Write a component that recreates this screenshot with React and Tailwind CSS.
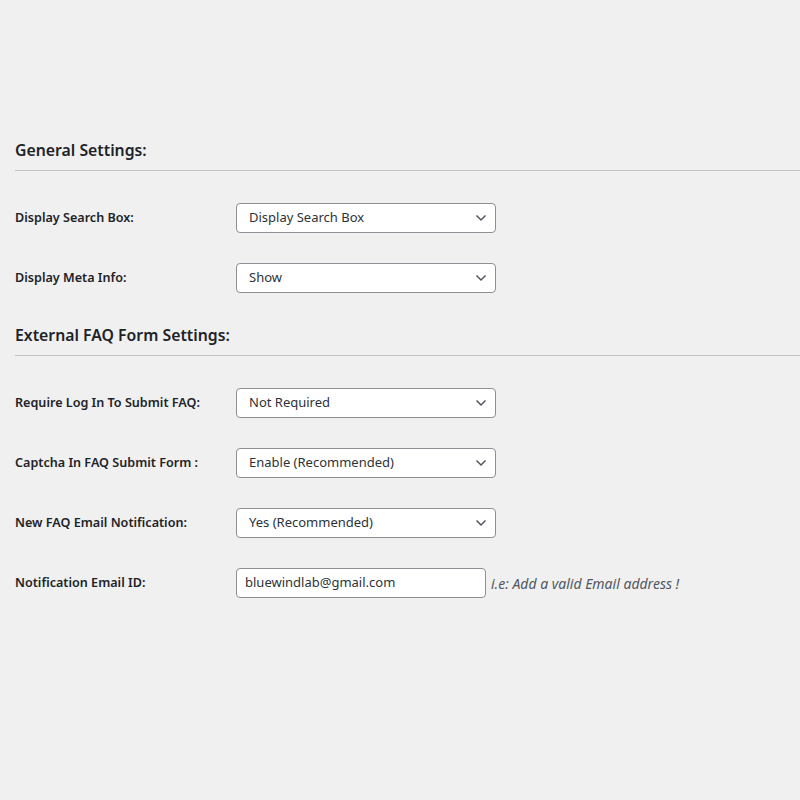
import React from "react";

const font = { fontFamily: '"Noto Sans", "Open Sans", sans-serif' };

const Chevron = () => (
  <svg width="12" height="8" viewBox="0 0 12 8" className="shrink-0">
    <polyline points="1.5,1.5 6,6 10.5,1.5" fill="none" stroke="#50575e" strokeWidth="1.5" />
  </svg>
);

const SelectBox = ({ value }) => (
  <div className="flex h-[30px] w-[260px] items-center justify-between rounded-[4px] border border-[#8c8f94] bg-white pl-[12px] pr-[8px] text-[13px] text-[#2c3338]">
    <span>{value}</span>
    <Chevron />
  </div>
);

const Row = ({ label, children }) => (
  <div className="flex items-center py-[15px]">
    <div className="w-[221px] shrink-0 text-[12.6px] font-semibold text-[#1d2327]">{label}</div>
    {children}
  </div>
);

const Section = ({ title, children }) => (
  <div>
    <h2 className="text-[15.8px] font-semibold leading-[22px] text-[#1d2327]">{title}</h2>
    <div className="mt-[9px] mb-[17px] h-px bg-[#c3c4c7]"></div>
    {children}
  </div>
);

export default function App() {
  return (
    <div className="min-h-[800px] w-[800px] bg-[#f0f0f1] pl-[15px] pt-[139px]" style={font}>
      <Section title="General Settings:">
        <Row label="Display Search Box:">
          <SelectBox value="Display Search Box" />
        </Row>
        <Row label="Display Meta Info:">
          <SelectBox value="Show" />
        </Row>
      </Section>
      <div className="mt-[16px]">
        <Section title="External FAQ Form Settings:">
          <Row label="Require Log In To Submit FAQ:">
            <SelectBox value="Not Required" />
          </Row>
          <Row label="Captcha In FAQ Submit Form :">
            <SelectBox value="Enable (Recommended)" />
          </Row>
          <Row label="New FAQ Email Notification:">
            <SelectBox value="Yes (Recommended)" />
          </Row>
          <Row label="Notification Email ID:">
            <div className="flex h-[30px] w-[250px] items-center rounded-[4px] border border-[#8c8f94] bg-white px-[8px] text-[13px] text-[#2c3338]">
              bluewindlab@gmail.com
            </div>
            <span className="ml-[5px] text-[14px] italic text-[#50575e]">i.e: Add a valid Email address !</span>
          </Row>
        </Section>
      </div>
    </div>
  );
}
